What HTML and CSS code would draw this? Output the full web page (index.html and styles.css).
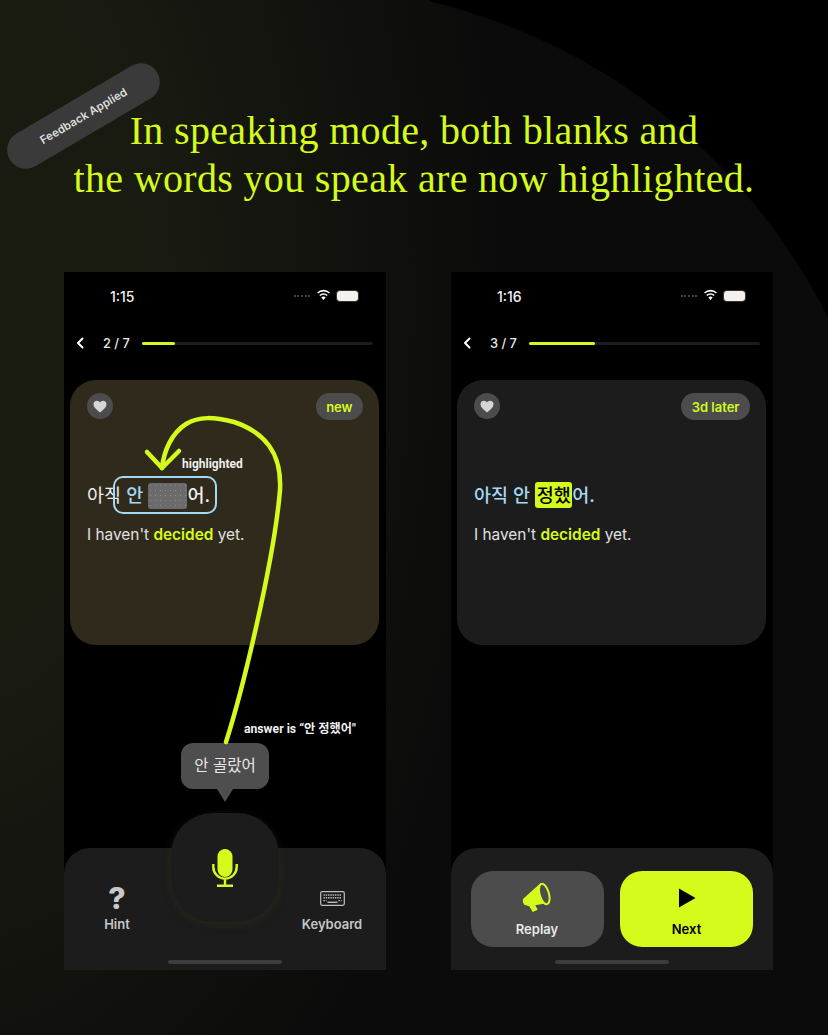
FILE: index.html
```html
<!DOCTYPE html>
<html lang="en">
<head>
<meta charset="utf-8">
<title>Feedback Applied</title>
<link rel="stylesheet" href="styles.css">
</head>
<body>
<main class="page">
  <div class="badge">Feedback Applied</div>
  <h1 class="title">In speaking mode, both blanks and<br>the words you speak are now highlighted.</h1>
  <div class="phones">
    <section class="phone">
      <div class="status">
        <span class="time">1:15</span>
        <span class="status-icons">
          <span class="dots"></span>
          <svg class="wifi" viewBox="0 0 16 12"><path d="M8 2.200c2.300 0 4.300.9 5.800 2.300l1.100-1.200A10 10 0 0 0 8 .5 10 10 0 0 0 1.100 3.300l1.100 1.200A8.400 8.400 0 0 1 8 2.200zM8 5.800c1.300 0 2.500.5 3.400 1.300l1.100-1.200A6.700 6.700 0 0 0 8 4.100a6.700 6.700 0 0 0-4.500 1.800l1.100 1.200A5 5 0 0 1 8 5.800zM8 7.700c-.9 0-1.700.3-2.300.9L8 11.300l2.300-2.700c-.6-.6-1.400-.9-2.300-.9z"/></svg>
          <span class="battery"></span>
        </span>
      </div>
      <div class="nav">
        <svg class="back" viewBox="0 0 8 12"><path d="M6.500 1.500 2 6l4.500 4.500"/></svg>
        <span class="count">2 / 7</span>
        <div class="track"><div class="fill fill-2"></div></div>
      </div>
      <div class="card card-new">
        <div class="card-top">
          <span class="heart-btn"><svg viewBox="0 0 14 13"><path d="M7 12.500C3 9.500.5 7.300.5 4.300.5 2.200 2 .8 3.900.8 5.200.8 6.400 1.500 7 2.600 7.600 1.500 8.800.8 10.100.8c1.900 0 3.400 1.400 3.400 3.500 0 3-2.500 5.200-6.500 8.200z"/></svg></span>
          <span class="pill">new</span>
        </div>
        <p class="korean"><span class="plain">아직</span> <span class="blue strong">안</span> <span class="blank"></span><span class="plain strong">어.</span></p>
        <p class="english">I haven't <b>decided</b> yet.</p>
      </div>
      <div class="spacer"></div>
      <div class="bubble-wrap">
        <div class="bubble">안 골랐어</div>
        <div class="bubble-tail"></div>
      </div>
      <div class="dock dock-mic">
        <div class="dock-item">
          <span class="dock-icon qmark">?</span>
          <span class="dock-label">Hint</span>
        </div>
        <div class="dock-item">
          <span class="dock-icon">
            <svg class="kbd" viewBox="0 0 25 15">
              <rect x=".7" y=".7" width="23.600" height="13.600" rx="1.500"/>
              <path class="keys" d="M3.500 4h18M3.500 6.800h18M3.500 9.600h3M18.500 9.600h3"/>
              <path class="bar" d="M7.500 11.300h10"/>
            </svg>
          </span>
          <span class="dock-label">Keyboard</span>
        </div>
        <div class="mic-btn">
          <svg viewBox="0 0 26 38"><rect class="mic-fill" x="5.500" y="0" width="15" height="28" rx="7.500"/><path class="mic-line" d="M1.300 15v3a11.700 11.700 0 0 0 23.400 0v-3M13 30v6M5 36.700h16"/></svg>
        </div>
        <div class="home"></div>
      </div>
      <span class="note note-high">highlighted</span>
      <span class="note note-answer">answer is “안 정했어"</span>
      <div class="circle-box"></div>
      <svg class="arrow" viewBox="0 0 322 698">
        <path d="M162 470C178 420 210 290 216 218C218 180 200 160 170 150C150 145 135 144 122 152C108 161 100 178 98 196"/>
        <path d="M83 180 98 196 115 179"/>
      </svg>
    </section>
    <section class="phone">
      <div class="status">
        <span class="time">1:16</span>
        <span class="status-icons">
          <span class="dots"></span>
          <svg class="wifi" viewBox="0 0 16 12"><path d="M8 2.200c2.300 0 4.300.9 5.800 2.300l1.100-1.200A10 10 0 0 0 8 .5 10 10 0 0 0 1.100 3.300l1.100 1.200A8.400 8.400 0 0 1 8 2.200zM8 5.800c1.300 0 2.500.5 3.400 1.300l1.100-1.200A6.700 6.700 0 0 0 8 4.100a6.700 6.700 0 0 0-4.500 1.800l1.100 1.200A5 5 0 0 1 8 5.800zM8 7.700c-.9 0-1.700.3-2.300.9L8 11.300l2.300-2.700c-.6-.6-1.400-.9-2.300-.9z"/></svg>
          <span class="battery"></span>
        </span>
      </div>
      <div class="nav">
        <svg class="back" viewBox="0 0 8 12"><path d="M6.500 1.500 2 6l4.500 4.500"/></svg>
        <span class="count">3 / 7</span>
        <div class="track"><div class="fill fill-3"></div></div>
      </div>
      <div class="card">
        <div class="card-top">
          <span class="heart-btn"><svg viewBox="0 0 14 13"><path d="M7 12.500C3 9.500.5 7.300.5 4.300.5 2.200 2 .8 3.900.8 5.200.8 6.400 1.500 7 2.600 7.600 1.500 8.800.8 10.100.8c1.900 0 3.400 1.400 3.400 3.500 0 3-2.500 5.200-6.500 8.200z"/></svg></span>
          <span class="pill">3d later</span>
        </div>
        <p class="korean"><span class="blue strong">아직 안</span> <mark class="hit">정했</mark><span class="blue strong">어.</span></p>
        <p class="english">I haven't <b>decided</b> yet.</p>
      </div>
      <div class="spacer"></div>
      <div class="dock dock-actions">
        <div class="action action-replay">
          <svg viewBox="0 0 30 30"><path class="horn" d="M16.700 1.700 1 16Q0 19 2.300 21.700L7.300 23.300 10.700 29 15.700 26.700 13.300 22.300 25.700 20z"/><ellipse class="horn-ring" cx="22.300" cy="11" rx="4.600" ry="10.500" transform="rotate(-16 22.300 11)"/></svg>
          <span>Replay</span>
        </div>
        <div class="action action-next">
          <svg viewBox="0 0 20 22"><path d="M2 1.500v19L18.500 11z"/></svg>
          <span>Next</span>
        </div>
        <div class="home"></div>
      </div>
    </section>
  </div>
</main>
</body>
</html>
```
FILE: styles.css
```css
* { box-sizing: border-box; }
html, body { margin: 0; padding: 0; background: #000; }
.page {
  position: relative;
  width: 828px;
  height: 1035px;
  overflow: hidden;
  padding-top: 107px;
  background-color: #0b0b0b;
  background-image:
    radial-gradient(circle 602px at -140px 586px, transparent 99.7%, #000 100%),
    radial-gradient(ellipse 560px 1000px at -60px 300px, #1c1d10 0%, #181910 45%, #0b0b0b 100%);
  background-size: 398px 320px, 100% 100%;
  background-position: top right, 0 0;
  background-repeat: no-repeat;
  font-family: Inter, "Noto Sans CJK KR", sans-serif;
}
.badge {
  position: absolute;
  left: -2px;
  top: 97px;
  width: 171px;
  height: 38px;
  border-radius: 19px;
  background: #3a3a3a;
  color: #dedede;
  font-size: 11.400px;
  font-weight: 600;
  line-height: 38px;
  text-align: center;
  transform: rotate(-30.500deg);
}
.title {
  margin: 0;
  color: #d4fb1b;
  font-family: "Liberation Serif", serif;
  font-size: 40px;
  font-weight: 400;
  letter-spacing: .33px;
  line-height: 48px;
  text-align: center;
}
.phones {
  display: flex;
  gap: 65px;
  margin-top: 69px;
  padding-left: 64px;
}
.phone {
  position: relative;
  display: flex;
  flex-direction: column;
  width: 322px;
  height: 698px;
  background: #000;
  color: #fff;
}
.status {
  display: flex;
  align-items: center;
  justify-content: space-between;
  height: 48px;
  padding: 0 28px 0 46px;
}
.time { font-size: 14px; font-weight: 500; color: #f2f2f2; }
.status-icons { display: flex; align-items: center; gap: 6px; }
.dots { width: 16px; border-top: 2px dotted #444; }
.wifi { width: 15px; height: 12px; fill: #fff; margin-top: -2px; }
.battery {
  width: 21px;
  height: 10px;
  background: #f3f0ee;
  border-radius: 3px;
  box-shadow: 0 0 0 1px #333;
}
.nav {
  display: flex;
  align-items: center;
  height: 46px;
  padding: 0 13px 0 12px;
}
.back { width: 8px; height: 12px; fill: none; stroke: #fff; stroke-width: 2; stroke-linecap: round; stroke-linejoin: round; }
.count { margin-left: 19px; width: 39px; font-size: 12.800px; font-weight: 500; color: #e8e8e8; white-space: pre; }
.track { flex: 1; height: 3px; border-radius: 2px; background: #1c1c1c; }
.fill { height: 100%; border-radius: 2px; background: #d4fb1b; }
.fill-2 { width: 14.300%; }
.fill-3 { width: 28.600%; }
.card {
  display: flex;
  flex-direction: column;
  width: 309px;
  height: 265px;
  margin: 14px 0 0 6px;
  padding: 13px 16px 0 17px;
  border-radius: 26px;
  background: #1c1c1c;
}
.card-new { background: #302a1c; }
.card-top { display: flex; align-items: flex-start; justify-content: space-between; height: 27px; }
.heart-btn {
  display: flex;
  align-items: center;
  justify-content: center;
  width: 26px;
  height: 26px;
  margin-left: 0;
  border-radius: 50%;
  background: #4c4c4c;
}
.heart-btn svg { width: 14px; height: 13px; fill: #d6d6d6; }
.pill {
  display: flex;
  align-items: center;
  height: 27px;
  padding: 0 10.500px;
  border-radius: 14px;
  background: #4c4c4c;
  color: #d4fb1b;
  font-size: 13px;
  font-weight: 600;
}
.korean {
  margin: 59px 0 0;
  height: 32px;
  font-size: 18.500px;
  line-height: 32px;
  white-space: pre;
  color: #f0f0f0;
}
.plain { color: #eeeeee; }
.blue { color: #a5d8f3; }
.strong { font-weight: 500; }
.blank {
  display: inline-block;
  width: 39px;
  height: 26px;
  vertical-align: -7px;
  border-radius: 3px;
  background-color: #6b6b6b;
  background-image: radial-gradient(circle, #8c8c8c .6px, transparent .8px);
  background-size: 5px 5px;
}
.hit {
  display: inline-block;
  padding: 0 1.500px;
  height: 26px;
  border-radius: 3px;
  background: #d4fb1b;
  color: #000;
  font-weight: 500;
  line-height: 26px;
}
.english {
  margin: 13px 0 0;
  font-size: 15.400px;
  line-height: 22px;
  color: #e0e0e0;
}
.english b { color: #d4fb1b; font-weight: 600; }
.spacer { flex: 1; }
.bubble-wrap {
  position: absolute;
  left: 117px;
  top: 471px;
  display: flex;
  flex-direction: column;
  align-items: center;
}
.bubble {
  width: 88px;
  height: 46px;
  border-radius: 12px;
  background: #4e4e4e;
  color: #e8e8e8;
  font-size: 15.500px;
  line-height: 46px;
  text-align: center;
}
.bubble-tail {
  width: 0;
  height: 0;
  border-left: 8px solid transparent;
  border-right: 8px solid transparent;
  border-top: 13px solid #4e4e4e;
}
.dock {
  position: relative;
  height: 122px;
  border-radius: 26px 26px 0 0;
  background: #1c1c1c;
}
.dock-mic {
  display: flex;
  justify-content: space-between;
  padding: 39px 19px 0 18px;
}
.dock-item {
  display: flex;
  flex-direction: column;
  align-items: center;
  gap: 7px;
  width: 70px;
}
.dock-icon {
  display: flex;
  align-items: center;
  justify-content: center;
  height: 22px;
}
.dock-label { font-size: 13px; font-weight: 600; color: #c6c6c6; line-height: 16px; white-space: nowrap; }
.qmark { font-size: 30px; font-weight: 800; color: #c8c8c8; }
.kbd { width: 25px; height: 15px; fill: none; stroke: #c0c0c0; stroke-width: 1.200; }
.kbd .keys { stroke-dasharray: 1.400 .9; stroke-width: 1.400; }
.kbd .bar { stroke-width: 1.400; }
.mic-btn {
  position: absolute;
  left: 107px;
  top: -35px;
  display: flex;
  align-items: center;
  justify-content: center;
  width: 108px;
  height: 109px;
  border-radius: 42px;
  background: #1c1c1c;
  box-shadow: 0 2px 9px rgba(74, 58, 24, .35);
}
.mic-btn svg { width: 26px; height: 38px; }
.mic-fill { fill: #d4fb1b; }
.mic-line { fill: none; stroke: #d4fb1b; stroke-width: 2.400; }
.dock-actions {
  display: flex;
  justify-content: space-between;
  padding: 23px 20px 0 19.500px;
}
.action {
  display: flex;
  flex-direction: column;
  align-items: center;
  justify-content: space-between;
  width: 133px;
  height: 76px;
  padding: 12px 0 10px;
  border-radius: 22px;
  font-size: 13px;
  font-weight: 600;
}
.action svg { height: 30px; width: 30px; }
.action-replay { background: #4c4c4c; color: #e8e8e8; }
.action-next { background: #d4fb1b; color: #000; }
.action-next svg { height: 22px; width: 20px; margin-top: 4px; fill: #000; }
.horn { fill: #d4fb1b; }
.horn-ring { fill: #4c4c4c; stroke: #d4fb1b; stroke-width: 2; }
.home {
  position: absolute;
  left: 104px;
  bottom: 6px;
  width: 114px;
  height: 4px;
  border-radius: 2px;
  background: #3c3c3c;
}
.note {
  position: absolute;
  color: #f0f0f0;
  font-family: Roboto, "Noto Sans CJK KR", sans-serif;
  font-size: 12px;
  font-weight: 700;
  white-space: nowrap;
}
.note-high { left: 118px; top: 185px; }
.note-answer { left: 180px; top: 447px; font-size: 12.200px; }
.circle-box {
  position: absolute;
  left: 49px;
  top: 204px;
  width: 104px;
  height: 38px;
  border: 2.500px solid #a5d8f3;
  border-radius: 10px;
}
.arrow {
  position: absolute;
  left: 0;
  top: 0;
  width: 322px;
  height: 698px;
  fill: none;
  stroke: #d4fb1b;
  stroke-width: 4.500;
  stroke-linecap: round;
  stroke-linejoin: round;
}
```
